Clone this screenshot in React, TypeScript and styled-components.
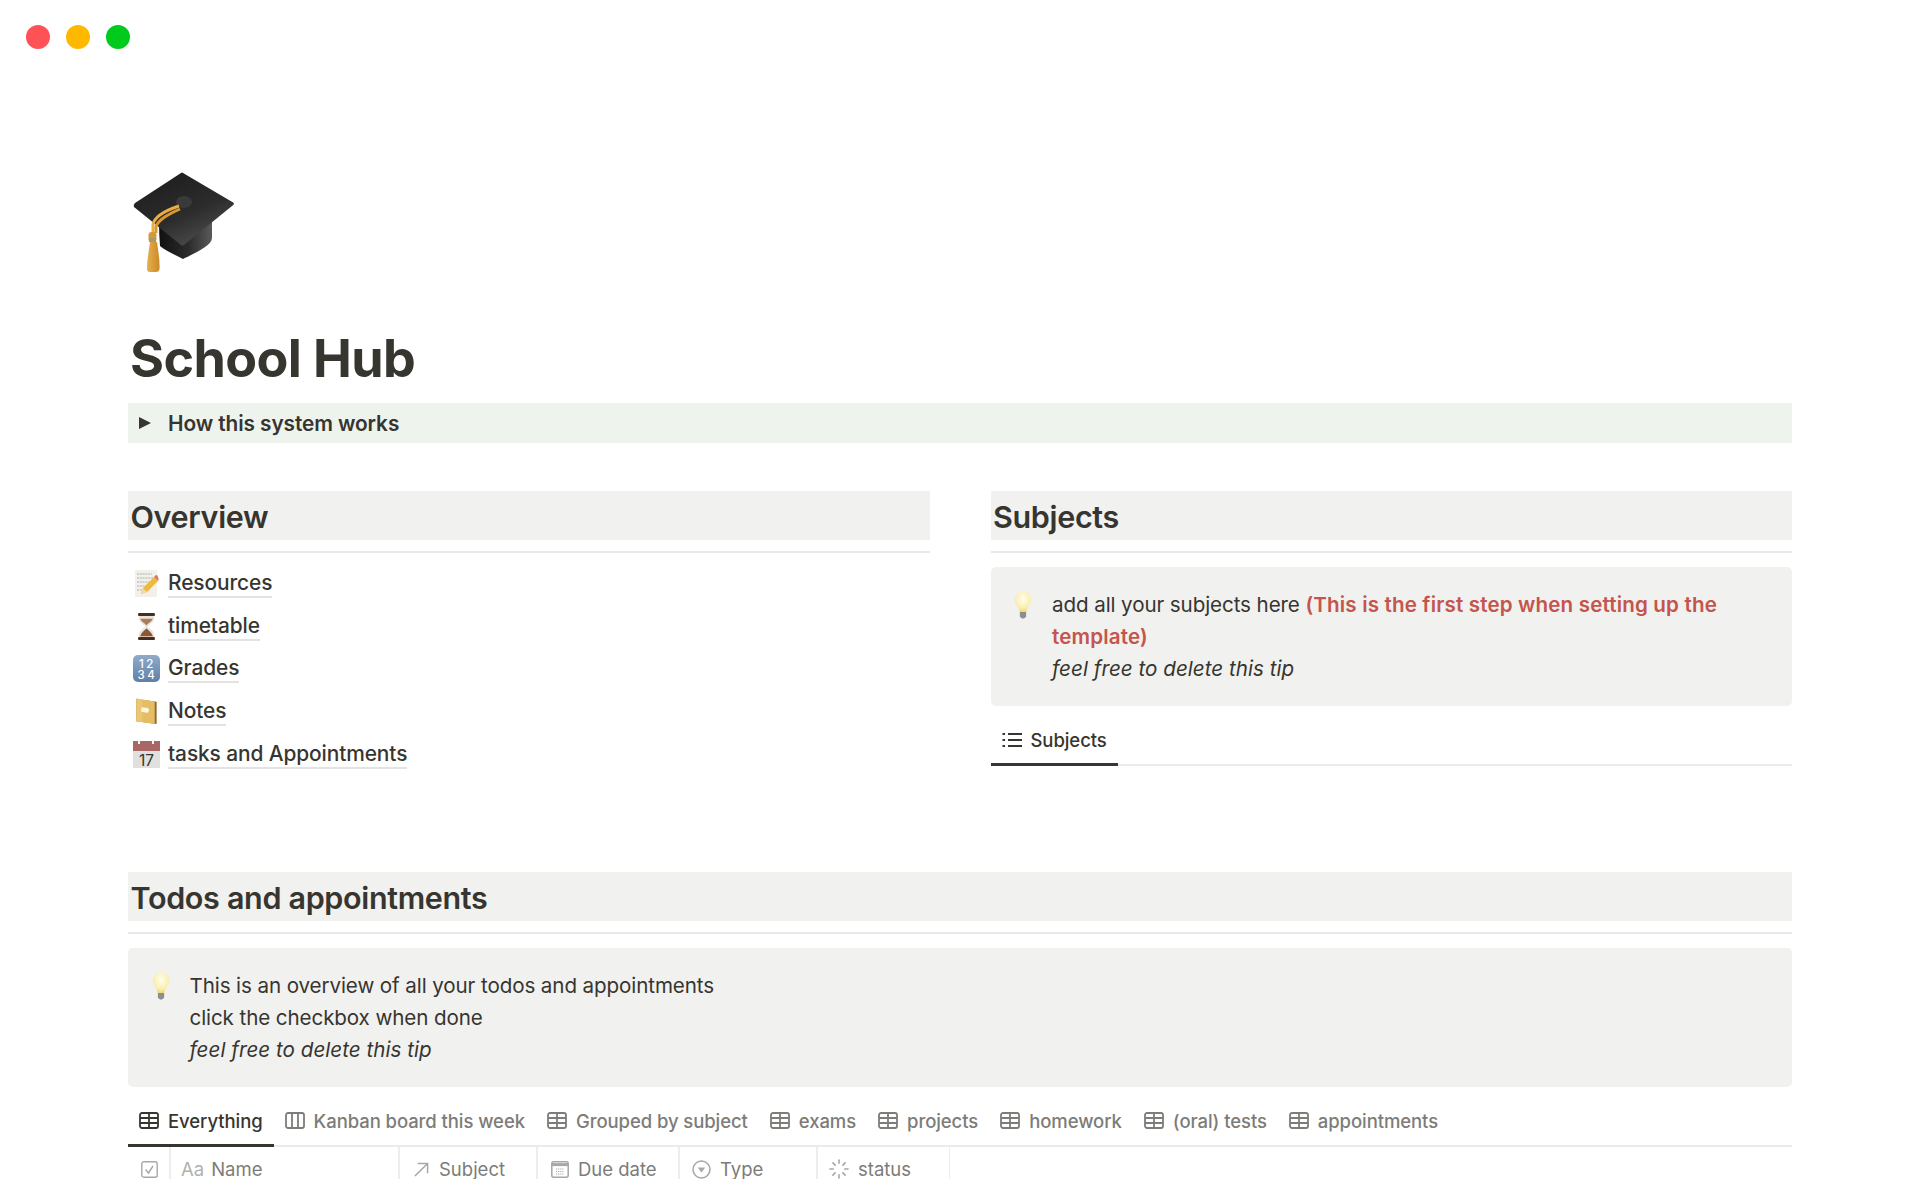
import styled, { createGlobalStyle } from "styled-components";

const GlobalStyle = createGlobalStyle`
    html, body {
        margin: 0;
        padding: 0;
        background: #fff;
    }
    body {
        font-family: Inter, "Liberation Sans", sans-serif;
        color: #37352f;
        overflow: hidden;
    }
    * {
        box-sizing: border-box;
    }
`;

const Page = styled.div`
    width: 1920px;
    height: 1200px;
    overflow: hidden;
    padding-top: 25px;
`;

const WindowControls = styled.div`
    display: flex;
    gap: 16px;
    padding-left: 26px;
`;

const Light = styled.span<{ $color: string }>`
    width: 24px;
    height: 24px;
    border-radius: 50%;
    background: ${(p) => p.$color};
`;

const Content = styled.main`
    width: 1664px;
    margin-left: 128px;
`;

const PageIcon = styled.div`
    margin-top: 123px;
    padding-left: 5px;
    height: 101px;
`;

const Title = styled.h1`
    margin: 56px 0 14px;
    padding-left: 2px;
    font-size: 52px;
    line-height: 60px;
    font-weight: 700;
    letter-spacing: -0.6px;
    color: #37352f;
`;

const Toggle = styled.div`
    display: flex;
    align-items: center;
    height: 40px;
    padding-left: 11px;
    background: #eff3ee;
    font-size: 20.8px;
    font-weight: 600;
    letter-spacing: -0.08px;
`;

const Caret = styled.span`
    width: 0;
    height: 0;
    border-left: 12px solid #37352f;
    border-top: 6.5px solid transparent;
    border-bottom: 6.5px solid transparent;
    margin-right: 17px;
`;

const Columns = styled.div`
    display: grid;
    grid-template-columns: 801.5px 801.5px;
    column-gap: 61px;
    margin-top: 48px;
`;

const Column = styled.section``;

const Heading = styled.h2`
    margin: 0;
    height: 49px;
    padding-left: 2.5px;
    background: #f1f1ef;
    font-size: 30.5px;
    line-height: 51px;
    font-weight: 600;
    letter-spacing: -0.33px;
`;

const Rule = styled.div`
    height: 2px;
    margin: 11px 0 14px;
    background: #e9e9e7;
`;

const LinkList = styled.div`
    display: flex;
    flex-direction: column;
    margin-top: -5px;
`;

const LinkRow = styled.div`
    display: flex;
    align-items: center;
    height: 42.7px;
`;

const LinkIcon = styled.span`
    display: flex;
    justify-content: center;
    width: 27px;
    margin-left: 5px;
    margin-right: 8px;
`;

const LinkText = styled.span`
    font-size: 20.9px;
    font-weight: 500;
    line-height: 27px;
    letter-spacing: -0.1px;
    border-bottom: 2px solid #e3e3e1;
`;

const Callout = styled.div`
    display: flex;
    padding: 22px 20px 21px 23.5px;
    border-radius: 5px;
    background: #f1f1ef;
`;

const CalloutIcon = styled.span`
    flex: none;
    width: 38px;
    padding-top: 2px;
`;

const CalloutBody = styled.div`
    font-size: 20.6px;
    line-height: 32px;
    letter-spacing: -0.1px;
`;

const Red = styled.strong`
    color: #c4554d;
    font-weight: 600;
    letter-spacing: 0.15px;
`;

const Tip = styled.em`
    display: block;
    letter-spacing: 0.03px;
`;

const TabBar = styled.div`
    display: flex;
    height: 60px;
    border-bottom: 2px solid #ebebe9;
`;

const Tab = styled.div<{ $active?: boolean }>`
    display: flex;
    align-items: center;
    gap: 9px;
    height: 60px;
    padding: 10px 11px 0;
    font-size: 18.5px;
    font-weight: 500;
    letter-spacing: -0.08px;
    color: ${(p) => (p.$active ? "#37352f" : "#7d7c78")};
    border-bottom: 3px solid ${(p) => (p.$active ? "#37352f" : "transparent")};
    margin-bottom: -2px;
`;

const Wide = styled.section`
    margin-top: 97px;
`;

const TableHead = styled.div`
    display: flex;
    height: 32px;
    overflow: hidden;
    width: 822px;
    color: #7d7c78;
    font-size: 18.5px;
    font-weight: 400;
`;

const HeadCell = styled.div<{ $w: number; $pad?: number; $gap?: number }>`
    flex: none;
    display: flex;
    gap: ${(p) => p.$gap ?? 9}px;
    align-items: center;
    width: ${(p) => p.$w}px;
    height: 44px;
    padding-left: ${(p) => p.$pad ?? 13}px;
    border-right: 2px solid #ededeb;
    white-space: nowrap;
`;

const Aa = styled.span`
    color: #b2b1ae;
`;

const TableIcon = ({ color = "#7d7c78" }: { color?: string }) => (
    <svg width="20" height="17" viewBox="0 0 20 17" fill="none" stroke={color} strokeWidth="1.8">
        <rect x="1" y="1" width="18" height="15" rx="2" />
        <path d="M1 6h18M1 11h18M10 1v15" />
    </svg>
);

const KanbanIcon = () => (
    <svg width="20" height="17" viewBox="0 0 20 17" fill="none" stroke="#7d7c78" strokeWidth="1.8">
        <rect x="1" y="1" width="18" height="15" rx="2" />
        <path d="M7 1v15M13 1v15" />
    </svg>
);

const ListIcon = () => (
    <svg width="20" height="16" viewBox="0 0 20 16" fill="none" stroke="#37352f" strokeWidth="1.8">
        <path d="M6 2h14M6 8h14M6 14h14M0.5 2h2.5M0.5 8h2.5M0.5 14h2.5" />
    </svg>
);

const CheckIcon = () => (
    <svg width="17" height="17" viewBox="0 0 17 17" fill="none" stroke="#a8a7a4" strokeWidth="1.4">
        <rect x="0.8" y="0.8" width="15.4" height="15.4" rx="2" />
        <path d="M4.5 8.5l3 3.5 4.5-7" />
    </svg>
);

const ArrowIcon = () => (
    <svg width="15" height="15" viewBox="0 0 16 16" fill="none" stroke="#a8a7a4" strokeWidth="1.6">
        <path d="M1 15L14.5 1.5M4 1.5h10.5V12" />
    </svg>
);

const DateIcon = () => (
    <svg width="18" height="17" viewBox="0 0 18 17" fill="none">
        <rect x="0.8" y="0.8" width="16.4" height="15.4" rx="2" stroke="#a8a7a4" strokeWidth="1.5" />
        <path d="M1 3.6h16" stroke="#a8a7a4" strokeWidth="3" />
        <path
            d="M5 8h8M5 10.5h8M5 13h8"
            stroke="#a8a7a4"
            strokeWidth="1"
            strokeDasharray="1.2 0.9"
        />
    </svg>
);

const SelectIcon = () => (
    <svg width="19" height="19" viewBox="0 0 19 19" fill="none">
        <circle cx="9.5" cy="9.5" r="8.5" stroke="#a8a7a4" strokeWidth="1.5" />
        <path d="M5.8 7.4h7.4L9.5 12.6z" fill="#a8a7a4" />
    </svg>
);

const StatusIcon = () => (
    <svg width="20" height="20" viewBox="0 0 20 20" fill="none" stroke="#a8a7a4" strokeWidth="1.6" strokeLinecap="round">
        <path d="M10 1v3.2M10 15.8V19M1 10h3.2M15.8 10H19M3.9 3.9l2.2 2.2M13.9 13.9l2.2 2.2M3.9 16.1l2.2-2.2M13.9 6.1l2.2-2.2" />
    </svg>
);

const GradCap = () => (
    <svg width="102" height="101" viewBox="0 0 102 101">
        <defs>
            <linearGradient id="capTop" x1="0" y1="0" x2="0.6" y2="1">
                <stop offset="0" stopColor="#1b1b1b" />
                <stop offset="0.65" stopColor="#2c2c2c" />
                <stop offset="1" stopColor="#4a4a4a" />
            </linearGradient>
            <linearGradient id="capBase" x1="0" y1="0" x2="1" y2="0">
                <stop offset="0" stopColor="#111" />
                <stop offset="0.55" stopColor="#2b2b2b" />
                <stop offset="1" stopColor="#5a5a5a" />
            </linearGradient>
            <linearGradient id="tassel" x1="0" y1="0" x2="1" y2="0">
                <stop offset="0" stopColor="#e6b04e" />
                <stop offset="1" stopColor="#c98a26" />
            </linearGradient>
        </defs>
        <path d="M26 50L79 46V66C79 74 60 82 50 87C42 83 32 78 27 74Q26 62 26 50Z" fill="url(#capBase)" />
        <path d="M50 1L101 31Q101 33 99 34L51 73Q50 74 48 73L1 35Q0 33 2 31L48 1Q49 0 50 1Z" fill="url(#capTop)" />
        <ellipse cx="51" cy="30" rx="8" ry="6" fill="#3a3a3a" />
        <path d="M46 34C34 38 21 44 20 53V61" stroke="#e8ad45" strokeWidth="3" fill="none" />
        <path d="M47 37C38 41 25 47 23 55V61" stroke="#d9982f" strokeWidth="3" fill="none" />
        <rect x="15.5" y="60" width="8" height="10" rx="3" fill="#d39a3a" />
        <rect x="16" y="66" width="7" height="4" fill="#a89a6d" />
        <path d="M17 70H24C25 78 27 88 26.5 97Q26 100 23 100H17Q14 100 14 97C14 88 16 78 17 70Z" fill="url(#tassel)" />
    </svg>
);

const MemoIcon = () => (
    <svg width="24" height="27" viewBox="2 0 24 27">
        <rect x="2" y="0" width="22" height="27" fill="#f2f0ea" />
        <path
            d="M4 4h15M4 8h17M4 12h12M4 16h9M4 20h6"
            stroke="#a8a7a2"
            strokeWidth="0.9"
            strokeDasharray="2 0.8"
        />
        <path d="M8 24L10 18L21 7L25 11L14 22Z" fill="#eeb93c" />
        <path d="M21 7L22.5 5.5Q23.5 4.5 24.5 5.5L25.5 8.5Q26 9.5 25 11Z" fill="#e0716b" />
        <path d="M8 24L10 18L14 22Z" fill="#f5d7a8" />
    </svg>
);

const HourglassIcon = () => (
    <svg width="19" height="27" viewBox="4 0 18 28" preserveAspectRatio="none">
        <path d="M6 3H20V6C20 10 15 12 14 14C15 16 20 18 20 22V25H6V22C6 18 11 16 12 14C11 12 6 10 6 6Z" fill="#e7e4de" />
        <path d="M7 6H19C18 9 14 11 13 13C12 11 8 9 7 6Z" fill="#a97d5a" />
        <path d="M7 24C8 20 11 18 13 16C15 18 18 20 19 24Z" fill="#8a5733" />
        <rect x="5" y="0" width="16" height="3" rx="1" fill="#4b2c1a" />
        <rect x="5" y="25" width="16" height="3" rx="1" fill="#4b2c1a" />
    </svg>
);

const NumbersIcon = () => (
    <svg width="27" height="27" viewBox="0 0 27 27">
        <defs>
            <linearGradient id="tile" x1="0" y1="0" x2="0" y2="1">
                <stop offset="0" stopColor="#8eabcb" />
                <stop offset="1" stopColor="#5f80a6" />
            </linearGradient>
        </defs>
        <rect x="0" y="0" width="27" height="27" rx="5" fill="url(#tile)" />
        <text x="14.5" y="12.5" textAnchor="middle" fontSize="11.5" fontFamily="Inter, sans-serif" fontWeight="500" letterSpacing="2.5" fill="#fff">
            12
        </text>
        <text x="14.5" y="23.5" textAnchor="middle" fontSize="11.5" fontFamily="Inter, sans-serif" fontWeight="500" letterSpacing="2.5" fill="#fff">
            34
        </text>
    </svg>
);

const NotebookIcon = () => (
    <svg width="21" height="27" viewBox="3 0 21 28">
        <path d="M3 1L24 4V27L3 24Z" fill="#8f6a2c" />
        <path d="M3 0.5L22 3.5V27L3 24Z" fill="#e6bd64" />
        <path d="M3 0.5L9 1.5V25L3 24Z" fill="#efcd7f" opacity="0.6" />
        <rect x="8" y="10" width="8" height="5" rx="1.5" fill="#fbf4df" transform="rotate(8 12 12)" />
    </svg>
);

const CalendarIcon = () => (
    <svg width="27" height="27" viewBox="0 0 27 27">
        <rect x="0" y="0" width="27" height="27" fill="#e0e0de" />
        <rect x="0" y="0" width="27" height="10" fill="#a86664" />
        <path d="M6 0v3M20 0v3" stroke="#f4f4f4" strokeWidth="2" />
        <text x="13.5" y="24.5" textAnchor="middle" fontSize="15.5" fontFamily="Inter, sans-serif" fill="#37352f">
            17
        </text>
    </svg>
);

const BulbIcon = () => (
    <svg width="18" height="28" viewBox="0 0 20 28" preserveAspectRatio="none">
        <defs>
            <radialGradient id="glass" cx="0.5" cy="0.35" r="0.7">
                <stop offset="0" stopColor="#fffdf0" />
                <stop offset="0.65" stopColor="#fbefb0" />
                <stop offset="1" stopColor="#eed064" />
            </radialGradient>
        </defs>
        <path d="M10 0.5C4.5 0.5 1 4.5 1 9C1 13 5.5 16 6.5 21H13.5C14.5 16 19 13 19 9C19 4.5 15.5 0.5 10 0.5Z" fill="url(#glass)" />
        <path d="M6.5 21H13.5V25Q13.5 26 12.5 26.5L11 27.5H9L7.5 26.5Q6.5 26 6.5 25Z" fill="#8e8e8c" />
    </svg>
);

const links = [
    { label: "Resources", icon: <MemoIcon /> },
    { label: "timetable", icon: <HourglassIcon /> },
    { label: "Grades", icon: <NumbersIcon /> },
    { label: "Notes", icon: <NotebookIcon /> },
    { label: "tasks and Appointments", icon: <CalendarIcon /> },
];

const views = ["Grouped by subject", "exams", "projects", "homework", "(oral) tests", "appointments"];

const App = () => {
    return (
        <Page>
            <GlobalStyle />
            <WindowControls>
                <Light $color="#ff5257" />
                <Light $color="#ffb800" />
                <Light $color="#00cb1d" />
            </WindowControls>
            <Content>
                <PageIcon>
                    <GradCap />
                </PageIcon>
                <Title>School Hub</Title>
                <Toggle>
                    <Caret />
                    How this system works
                </Toggle>
                <Columns>
                    <Column>
                        <Heading>Overview</Heading>
                        <Rule />
                        <LinkList>
                            {links.map((link) => (
                                <LinkRow key={link.label}>
                                    <LinkIcon>{link.icon}</LinkIcon>
                                    <LinkText>{link.label}</LinkText>
                                </LinkRow>
                            ))}
                        </LinkList>
                    </Column>
                    <Column>
                        <Heading>Subjects</Heading>
                        <Rule />
                        <Callout>
                            <CalloutIcon>
                                <BulbIcon />
                            </CalloutIcon>
                            <CalloutBody>
                                add all your subjects here{" "}
                                <Red>(This is the first step when setting up the template)</Red>
                                <Tip>feel free to delete this tip</Tip>
                            </CalloutBody>
                        </Callout>
                        <TabBar>
                            <Tab $active>
                                <ListIcon />
                                Subjects
                            </Tab>
                        </TabBar>
                    </Column>
                </Columns>
                <Wide>
                    <Heading>Todos and appointments</Heading>
                    <Rule />
                    <Callout>
                        <CalloutIcon>
                            <BulbIcon />
                        </CalloutIcon>
                        <CalloutBody>
                            This is an overview of all your todos and appointments
                            <br />
                            click the checkbox when done
                            <Tip>feel free to delete this tip</Tip>
                        </CalloutBody>
                    </Callout>
                    <TabBar>
                        <Tab $active>
                            <TableIcon color="#37352f" />
                            Everything
                        </Tab>
                        <Tab>
                            <KanbanIcon />
                            Kanban board this week
                        </Tab>
                        {views.map((view) => (
                            <Tab key={view}>
                                <TableIcon />
                                {view}
                            </Tab>
                        ))}
                    </TabBar>
                    <TableHead>
                        <HeadCell $w={43}>
                            <CheckIcon />
                        </HeadCell>
                        <HeadCell $w={229} $pad={10} $gap={7}>
                            <Aa>Aa</Aa>
                            Name
                        </HeadCell>
                        <HeadCell $w={138} $pad={14} $gap={10}>
                            <ArrowIcon />
                            Subject
                        </HeadCell>
                        <HeadCell $w={142} $pad={13}>
                            <DateIcon />
                            Due date
                        </HeadCell>
                        <HeadCell $w={138} $pad={12}>
                            <SelectIcon />
                            Type
                        </HeadCell>
                        <HeadCell $w={133} $pad={11}>
                            <StatusIcon />
                            status
                        </HeadCell>
                    </TableHead>
                </Wide>
            </Content>
        </Page>
    );
};

export default App;
